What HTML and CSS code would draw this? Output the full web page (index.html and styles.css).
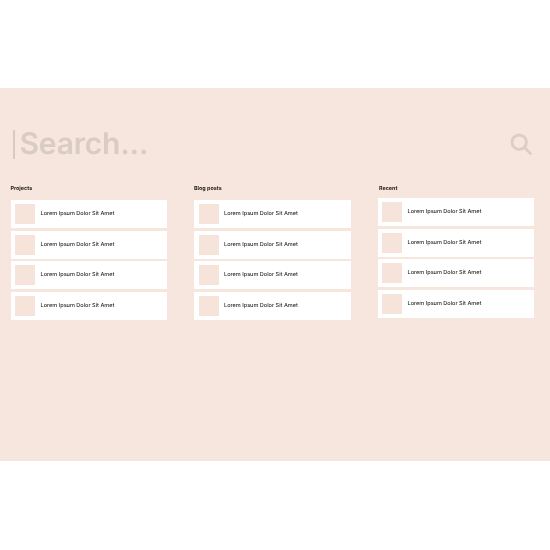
FILE: index.html
```html
<!DOCTYPE html>
<html lang="en">
  <head>
    <meta charset="UTF-8" />
    <title>Search</title>
    <link rel="stylesheet" href="styles.css">
  </head>
  <body>
    <div class="panel">
      <div class="searchBar">
        <span class="caret"></span>
        <span class="searchText">Search...</span>
        <svg class="searchIcon" width="22" height="22" viewBox="0 0 22 22" fill="none">
          <circle cx="9.2" cy="9.2" r="7.2" stroke="#dccdc5" stroke-width="2.8" />
          <path d="M14.6 14.6L20.4 20.4" stroke="#dccdc5" stroke-width="2.8" stroke-linecap="round" />
        </svg>
      </div>
      <div class="columns">
        <div class="column">
          <div class="heading">Projects</div>
          <div class="row"><div class="thumb"></div><span>Lorem Ipsum Dolor Sit Amet</span></div>
          <div class="row"><div class="thumb"></div><span>Lorem Ipsum Dolor Sit Amet</span></div>
          <div class="row"><div class="thumb"></div><span>Lorem Ipsum Dolor Sit Amet</span></div>
          <div class="row"><div class="thumb"></div><span>Lorem Ipsum Dolor Sit Amet</span></div>
        </div>
        <div class="column">
          <div class="heading">Blog posts</div>
          <div class="row"><div class="thumb"></div><span>Lorem Ipsum Dolor Sit Amet</span></div>
          <div class="row"><div class="thumb"></div><span>Lorem Ipsum Dolor Sit Amet</span></div>
          <div class="row"><div class="thumb"></div><span>Lorem Ipsum Dolor Sit Amet</span></div>
          <div class="row"><div class="thumb"></div><span>Lorem Ipsum Dolor Sit Amet</span></div>
        </div>
        <div class="column recent">
          <div class="heading">Recent</div>
          <div class="row"><div class="thumb"></div><span>Lorem Ipsum Dolor Sit Amet</span></div>
          <div class="row"><div class="thumb"></div><span>Lorem Ipsum Dolor Sit Amet</span></div>
          <div class="row"><div class="thumb"></div><span>Lorem Ipsum Dolor Sit Amet</span></div>
          <div class="row"><div class="thumb"></div><span>Lorem Ipsum Dolor Sit Amet</span></div>
        </div>
      </div>
    </div>
  </body>
</html>
```

FILE: styles.css
```css
* {
  box-sizing: border-box;
}
html {
  font-family: "Inter", "Liberation Sans", sans-serif;
  text-rendering: geometricPrecision;
}
body {
  margin: 0;
  height: 550px;
  background: #ffffff;
  overflow: hidden;
}
.panel {
  margin-top: 88px;
  height: 373px;
  padding-top: 41px;
  background: #f6e6de;
  filter: blur(0.4px);
}
.searchBar {
  display: flex;
  align-items: center;
  height: 30px;
  padding: 0 18px 0 13px;
}
.caret {
  width: 1.5px;
  height: 29px;
  background: #d9c9c0;
  margin-right: 5px;
}
.searchText {
  flex: 1;
  font-size: 30px;
  font-weight: 600;
  letter-spacing: -0.2px;
  color: #d9ccc5;
}
.columns {
  display: grid;
  grid-template-columns: 156.5px 156.5px 156.5px;
  column-gap: 27px;
  padding: 26px 0 0 10.5px;
}
.column {
  display: flex;
  flex-direction: column;
  gap: 2.7px;
}
.heading {
  height: 9px;
  margin-bottom: 3.3px;
  font-size: 5.4px;
  line-height: 9px;
  font-weight: 700;
  color: #2a211e;
}
.recent .heading {
  margin-bottom: 1.3px;
  padding-left: 1.5px;
}
.row {
  display: flex;
  align-items: center;
  gap: 5.5px;
  height: 28px;
  padding-left: 4.5px;
  background: #ffffff;
  font-size: 5.55px;
  font-weight: 500;
  color: #2f2a28;
}
.thumb {
  width: 20px;
  height: 20px;
  background: #f6e3da;
}
```
